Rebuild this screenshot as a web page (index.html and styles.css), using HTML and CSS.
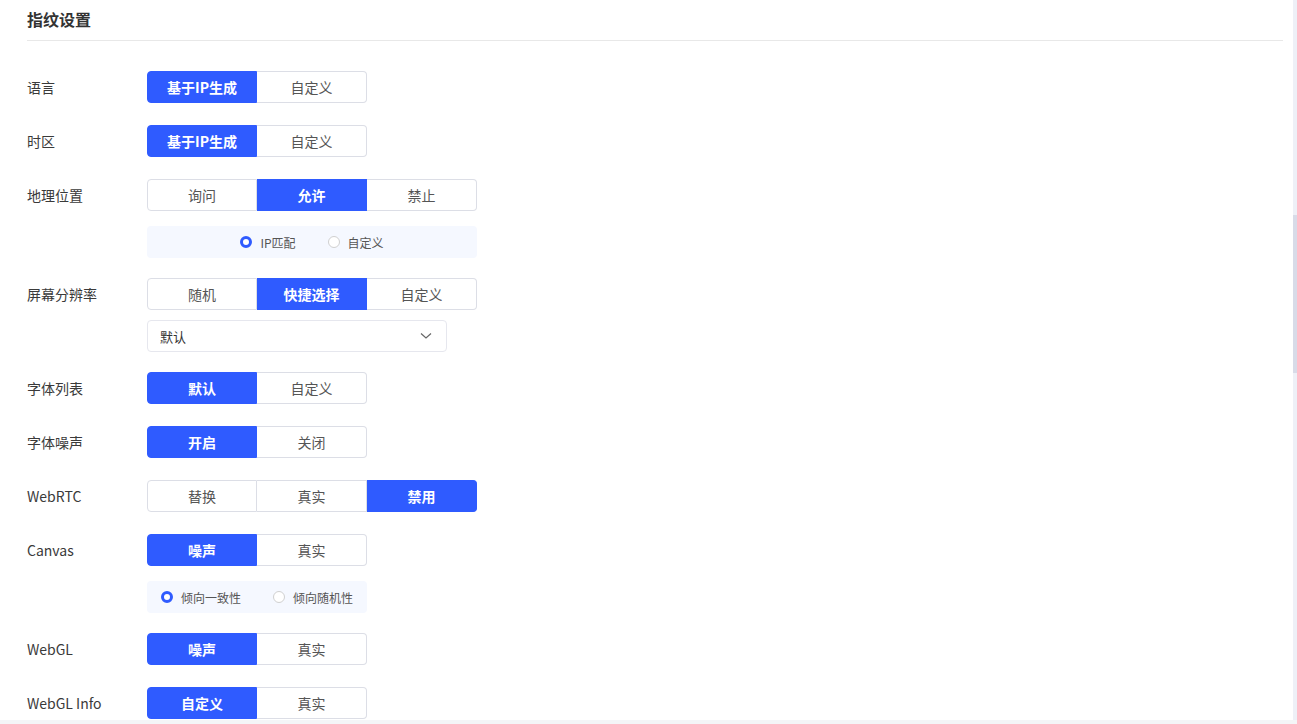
FILE: index.html
```html
<!DOCTYPE html>
<html>
<head>
  <meta http-equiv="Content-Type" content="text/html; charset=UTF-8" />
  <title>指纹设置</title>
  <link rel="stylesheet" href="styles.css">
</head>
<body>
<div class="page">
  <div class="panel">
    <div class="panel-title">指纹设置</div>
    <div class="form">

      <div class="form-item">
        <div class="label">语言</div>
        <div class="field">
          <div class="seg">
            <span class="seg-btn active">基于IP生成</span><span class="seg-btn">自定义</span>
          </div>
        </div>
      </div>

      <div class="form-item">
        <div class="label">时区</div>
        <div class="field">
          <div class="seg">
            <span class="seg-btn active">基于IP生成</span><span class="seg-btn">自定义</span>
          </div>
        </div>
      </div>

      <div class="form-item has-sub">
        <div class="label">地理位置</div>
        <div class="field">
          <div class="seg">
            <span class="seg-btn">询问</span><span class="seg-btn active">允许</span><span class="seg-btn">禁止</span>
          </div>
          <div class="radio-box wide">
            <span class="radio checked"><i></i>IP匹配</span>
            <span class="radio"><i></i>自定义</span>
          </div>
        </div>
      </div>

      <div class="form-item has-sub">
        <div class="label">屏幕分辨率</div>
        <div class="field">
          <div class="seg">
            <span class="seg-btn">随机</span><span class="seg-btn active">快捷选择</span><span class="seg-btn">自定义</span>
          </div>
          <div class="select">
            <span>默认</span>
            <svg width="12" height="8" viewBox="0 0 12 8"><path d="M1 1.5 L6 6 L11 1.5" fill="none" stroke="#666" stroke-width="1.2"/></svg>
          </div>
        </div>
      </div>

      <div class="form-item">
        <div class="label">字体列表</div>
        <div class="field">
          <div class="seg">
            <span class="seg-btn active">默认</span><span class="seg-btn">自定义</span>
          </div>
        </div>
      </div>

      <div class="form-item">
        <div class="label">字体噪声</div>
        <div class="field">
          <div class="seg">
            <span class="seg-btn active">开启</span><span class="seg-btn">关闭</span>
          </div>
        </div>
      </div>

      <div class="form-item">
        <div class="label">WebRTC</div>
        <div class="field">
          <div class="seg">
            <span class="seg-btn">替换</span><span class="seg-btn">真实</span><span class="seg-btn active">禁用</span>
          </div>
        </div>
      </div>

      <div class="form-item has-sub">
        <div class="label">Canvas</div>
        <div class="field">
          <div class="seg">
            <span class="seg-btn active">噪声</span><span class="seg-btn">真实</span>
          </div>
          <div class="radio-box">
            <span class="radio checked"><i></i>倾向一致性</span>
            <span class="radio"><i></i>倾向随机性</span>
          </div>
        </div>
      </div>

      <div class="form-item">
        <div class="label">WebGL</div>
        <div class="field">
          <div class="seg">
            <span class="seg-btn active">噪声</span><span class="seg-btn">真实</span>
          </div>
        </div>
      </div>

      <div class="form-item">
        <div class="label">WebGL Info</div>
        <div class="field">
          <div class="seg">
            <span class="seg-btn active">自定义</span><span class="seg-btn">真实</span>
          </div>
        </div>
      </div>

    </div>
  </div>
  <div class="scrollbar"><div class="thumb"></div></div>
</div>
</body>
</html>
```

FILE: styles.css
```css
html, body {
	margin: 0;
	padding: 0;
	height: 100%;
	overflow: hidden;
	background: #f4f5f7;
}
body {
	font-family: "Noto Sans CJK SC", "Liberation Sans", sans-serif;
	color: #333;
	font-size: 14px;
}
.page {
	display: flex;
	height: 720px;
	background: #fff;
}
.panel {
	flex: 1;
	padding: 0 0 0 27px;
	overflow: hidden;
}
.panel-title {
	height: 41px;
	line-height: 39px;
	font-size: 16px;
	font-weight: bold;
	color: #333;
	border-bottom: 1px solid #e8e8e8;
	box-sizing: border-box;
}
.form {
	padding-top: 30px;
}
.form-item {
	display: flex;
	margin-bottom: 22px;
}
.form-item.has-sub {
	margin-bottom: 20px;
}
.label {
	width: 120px;
	height: 32px;
	line-height: 32px;
	flex-shrink: 0;
	color: #3a3a3a;
}
.field {
	display: flex;
	flex-direction: column;
	align-items: flex-start;
}
.seg {
	display: flex;
}
.seg-btn {
	width: 110px;
	height: 32px;
	line-height: 30px;
	box-sizing: border-box;
	text-align: center;
	color: #555;
	border: 1px solid #dcdee6;
	border-left-width: 0;
	background: #fff;
}
.seg-btn:first-child {
	border-left-width: 1px;
	border-radius: 4px 0 0 4px;
}
.seg-btn:last-child {
	border-radius: 0 4px 4px 0;
}
.seg-btn.active {
	background: #2f5bff;
	border-color: #2f5bff;
	color: #fff;
	font-weight: bold;
}
.radio-box {
	margin-top: 15px;
	height: 32px;
	padding: 0 14px;
	background: #f5f8ff;
	border-radius: 4px;
	display: flex;
	align-items: center;
	justify-content: center;
	gap: 32px;
	font-size: 12px;
	color: #555;
}
.radio-box.wide {
	width: 330px;
	box-sizing: border-box;
}
.radio {
	display: flex;
	align-items: center;
}
.radio i {
	width: 12px;
	height: 12px;
	box-sizing: border-box;
	border: 1px solid #d0d0d0;
	border-radius: 50%;
	background: #fff;
	margin-right: 8px;
}
.radio.checked i {
	border: 3px solid #2f5bff;
}
.select {
	margin-top: 10px;
	width: 300px;
	height: 32px;
	box-sizing: border-box;
	border: 1px solid #e6e7ee;
	border-radius: 4px;
	padding: 0 14px 0 12px;
	display: flex;
	align-items: center;
	justify-content: space-between;
	font-size: 13px;
	color: #333;
}
.scrollbar {
	width: 4px;
	margin-left: 10px;
	background: #eef0f7;
	flex-shrink: 0;
}
.thumb {
	margin-top: 215px;
	height: 158px;
	background: #d8dbe8;
}
```
